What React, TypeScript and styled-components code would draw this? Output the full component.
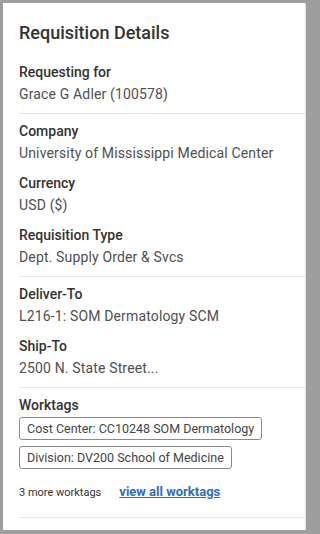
import React from "react";
import styled, { createGlobalStyle } from "styled-components";

const GlobalStyle = createGlobalStyle`
  html, body {
    margin: 0;
    padding: 0;
    background: #9e9e9e;
  }
  body {
    font-family: Roboto, "Liberation Sans", Arial, sans-serif;
  }
`;

const Frame = styled.div`
  width: 311px;
  height: 534px;
  box-sizing: border-box;
  padding: 3px 5px 4px 3px;
  background: #9e9e9e;
`;

const Card = styled.div`
  height: 100%;
  background: #fff;
  padding: 19px 0 0 16px;
  box-sizing: border-box;
  border-right: 1px solid #e2e2e2;
`;

const Title = styled.h1`
  margin: 0 0 17px;
  font-size: 18px;
  line-height: 22px;
  font-weight: 500;
  color: #333;
`;

const Section = styled.div<{ $first?: boolean }>`
  padding: ${(p) => (p.$first ? "0 0 8px" : "6px 0 8px")};
  border-bottom: 1px solid #e6e6e6;
`;

const Field = styled.div`
  & + & {
    margin-top: 8px;
  }
`;

const Label = styled.div`
  font-size: 14px;
  line-height: 22px;
  font-weight: 500;
  color: #333;
`;

const Value = styled.div`
  font-size: 14px;
  line-height: 22px;
  letter-spacing: 0.15px;
  color: #505050;
`;

const Tags = styled.div`
  display: flex;
  flex-direction: column;
  align-items: flex-start;
  gap: 6px;
  margin-top: 1px;
`;

const Tag = styled.span`
  display: inline-block;
  white-space: nowrap;
  border: 1px solid #8a8a8a;
  border-radius: 3px;
  padding: 0 7px;
  font-size: 12.5px;
  line-height: 21px;
  color: #444;
`;

const MoreRow = styled.div`
  display: flex;
  align-items: baseline;
  gap: 18px;
  margin-top: 15px;
  padding-bottom: 10px;
`;

const MoreText = styled.span`
  font-size: 11px;
  color: #333;
`;

const Link = styled.a`
  font-size: 13px;
  font-weight: 700;
  color: #2d6fbf;
  text-decoration: underline;
  cursor: pointer;
`;

export default function App() {
  return (
    <>
      <GlobalStyle />
      <Frame>
        <Card>
          <Title>Requisition Details</Title>
          <Section $first>
            <Field>
              <Label>Requesting for</Label>
              <Value>Grace G Adler (100578)</Value>
            </Field>
          </Section>
          <Section>
            <Field>
              <Label>Company</Label>
              <Value>University of Mississippi Medical Center</Value>
            </Field>
            <Field>
              <Label>Currency</Label>
              <Value>USD ($)</Value>
            </Field>
            <Field>
              <Label>Requisition Type</Label>
              <Value>Dept. Supply Order &amp; Svcs</Value>
            </Field>
          </Section>
          <Section>
            <Field>
              <Label>Deliver-To</Label>
              <Value>L216-1: SOM Dermatology SCM</Value>
            </Field>
            <Field>
              <Label>Ship-To</Label>
              <Value>2500 N. State Street...</Value>
            </Field>
          </Section>
          <Section>
            <Label>Worktags</Label>
            <Tags>
              <Tag>Cost Center: CC10248 SOM Dermatology</Tag>
              <Tag>Division: DV200 School of Medicine</Tag>
            </Tags>
            <MoreRow>
              <MoreText>3 more worktags</MoreText>
              <Link>view all worktags</Link>
            </MoreRow>
          </Section>
        </Card>
      </Frame>
    </>
  );
}
